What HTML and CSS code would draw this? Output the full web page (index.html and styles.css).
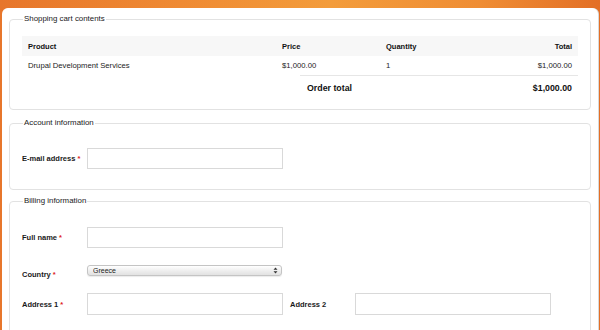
FILE: index.html
```html
<!DOCTYPE html>
<html>
<head>
<meta charset="utf-8">
<link rel="stylesheet" href="styles.css">
</head>
<body>
<div class="panel">
  <fieldset class="fs fs-cart">
    <legend>Shopping cart contents</legend>
    <table class="cart">
      <colgroup><col class="c1"><col class="c2"><col class="c3"><col class="c4"></colgroup>
      <thead>
        <tr><th>Product</th><th>Price</th><th>Quantity</th><th class="r">Total</th></tr>
      </thead>
      <tbody>
        <tr><td>Drupal Development Services</td><td>$1,000.00</td><td>1</td><td class="r">$1,000.00</td></tr>
      </tbody>
    </table>
    <div class="order-total"><span>Order total</span><span>$1,000.00</span></div>
  </fieldset>

  <fieldset class="fs fs-account">
    <legend>Account information</legend>
    <div class="row">
      <label class="lbl">E-mail address <span class="req">*</span></label>
      <input class="txt" type="text">
    </div>
  </fieldset>

  <fieldset class="fs fs-billing">
    <legend>Billing information</legend>
    <div class="row row-name">
      <label class="lbl">Full name <span class="req">*</span></label>
      <input class="txt" type="text">
    </div>
    <div class="row row-country">
      <label class="lbl">Country <span class="req">*</span></label>
      <div class="sel-wrap">
        <select class="sel"><option>Greece</option></select>
        <svg class="sel-arrows" width="5" height="7" viewBox="0 0 5 7"><path d="M2.5 0.5 L4.5 2.8 L0.5 2.8 Z M2.5 6.5 L4.5 4.2 L0.5 4.2 Z" fill="#333"/></svg>
      </div>
    </div>
    <div class="row row-addr">
      <label class="lbl">Address 1 <span class="req">*</span></label>
      <input class="txt" type="text">
      <label class="lbl lbl2">Address 2</label>
      <input class="txt" type="text">
    </div>
    <div class="row row-next">
      <label class="lbl"></label>
      <input class="txt" type="text">
      <label class="lbl lbl2"></label>
      <input class="txt" type="text">
    </div>
  </fieldset>
</div>
</body>
</html>
```
FILE: styles.css
```css
html, body {
  margin: 0;
  padding: 0;
  height: 100%;
  overflow: hidden;
}
body {
  background: linear-gradient(90deg, #e7762b 0%, #ef8a33 30%, #f39c3b 55%, #ef8d34 80%, #e36f26 100%);
  font-family: "Liberation Sans", Arial, sans-serif;
  font-size: 7.7px;
  color: #222;
}
.panel {
  margin: 8px 2px 0 2px;
  background: #fff;
  border-radius: 6px 6px 0 0;
  padding: 6px 7px 0 7px;
  height: 330px;
  box-shadow: 1px 0 0 #d9d9d9;
}
.fs {
  margin: 0;
  border: 1px solid #e2e2e2;
  border-radius: 4px;
  padding: 0 12px;
  min-width: 0;
}
.fs legend {
  padding: 0 1px;
  margin-left: 1px;
  line-height: 10px;
  font-size: 7.9px;
  color: #1a1a1a;
}
.fs-cart { padding-top: 12px; padding-bottom: 9px; }
.fs-account { margin-top: 8px; padding-top: 20px; padding-bottom: 20px; }
.fs-billing { margin-top: 6px; padding-top: 21px; padding-bottom: 20px; }

.cart {
  width: 100%;
  border-collapse: collapse;
  table-layout: fixed;
}
.cart .c1 { width: 254px; }
.cart .c2 { width: 104px; }
.cart .c3 { width: 98px; }
.cart th, .cart td {
  padding: 0 6px;
  text-align: left;
  white-space: nowrap;
}
.cart th {
  height: 20px;
  background: #f7f7f7;
  font-weight: bold;
  color: #111;
  font-size: 7.5px;
}
.cart td {
  height: 19px;
  color: #222;
}
.cart .r { text-align: right; }

.order-total {
  margin-left: 278px;
  border-top: 1px solid #e6e6e6;
  height: 24px;
  display: flex;
  align-items: center;
  justify-content: space-between;
  padding: 0 6px 0 7px;
  font-weight: bold;
  font-size: 8.8px;
  color: #111;
}

.row {
  display: flex;
  align-items: center;
}
.lbl {
  width: 65px;
  flex: none;
  font-weight: bold;
  font-size: 7.5px;
  color: #1a1a1a;
  white-space: nowrap;
}
.lbl2 { margin-left: 7px; }
.req { color: #d22; font-weight: bold; }
.txt {
  box-sizing: border-box;
  width: 196px;
  height: 21px;
  margin: 0;
  border: 1px solid #d9d9d9;
  background: #fff;
  padding: 0 4px;
  flex: none;
}
.row-addr { margin-top: 10px; }
.row-addr .txt { height: 22px; }
.row-next { margin-top: 15px; }
.row-next .txt { height: 22px; }

.row-country {
  margin-top: 17px;
  height: 18px;
  align-items: center;
}
.sel-wrap {
  position: relative;
  align-self: flex-start;
  width: 195px;
  height: 11px;
  flex: none;
}
.sel {
  appearance: none;
  -webkit-appearance: none;
  box-sizing: border-box;
  width: 100%;
  height: 11px;
  margin: 0;
  border: 1px solid #c4c4c4;
  border-radius: 3px;
  background: linear-gradient(#ffffff, #ececec 60%, #e2e2e2);
  font-family: "Liberation Sans", Arial, sans-serif;
  font-size: 7px;
  line-height: 9px;
  padding: 0 0 0 5px;
  color: #222;
  box-shadow: 0 1px 1px rgba(0,0,0,0.08);
}
.sel-arrows {
  position: absolute;
  right: 4px;
  top: 2px;
}
```
